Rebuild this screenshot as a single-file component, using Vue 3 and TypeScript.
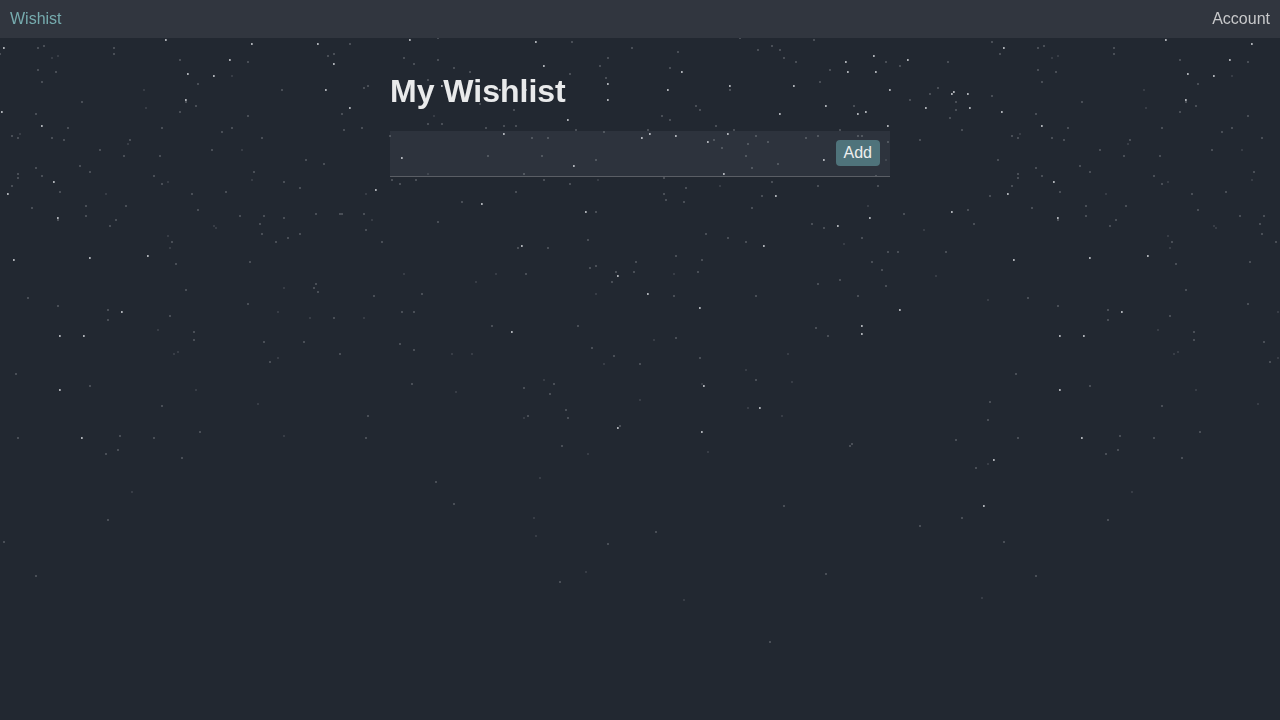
<script setup lang="ts">
import { ref } from 'vue'

type Layer = { name: string; stars: string }

const wish = ref('')
const wishes = ref<string[]>([])

function addWish(): void {
  const text = wish.value.trim()
  if (text) wishes.value.push(text)
  wish.value = ''
}

// Star centres as "x,y" pairs inside one repeating 1000px tile.
const layers: Layer[] = [
  {
    name: 'far',
    stars: `52,58 58,56 232,76 144,90 146,108 20,134 128,144 242,150 434,116 886,160 168,182 106,194
      168,236 170,248 252,180 214,226 216,228 284,288 428,174 598,180 366,194 372,220 404,274 496,274
      476,282 596,294 720,186 868,206 924,230 844,244 674,274 936,276 988,300 158,330 178,352 174,354
      196,390 284,436 258,404 278,358 278,312 310,318 132,492 364,318 452,354 472,354 604,364 654,340
      456,392 544,380 524,418 640,400 588,454 540,478 534,518 536,536 586,572 788,354 746,370 792,382
      702,384 748,408 782,416 708,452 988,464 982,598 684,600`,
  },
  {
    name: 'middle',
    stars: `38,48 44,46 0,54 1000,54 114,48 114,54 38,70 56,72 42,82 180,60 248,62 198,84 328,56 334,54
      82,102 36,114 186,102 196,106 180,112 282,90 248,116 68,128 162,128 232,128 222,132 262,138
      12,136 18,138 52,138 64,140 130,140 100,150 124,156 160,156 212,150 306,160
      350,44 438,38 404,58 414,64 438,60 454,68 470,72 572,42 632,48 608,58 600,66 570,74 606,78
      428,80 368,86 364,88 342,114 344,130 362,128 390,136 428,124 442,124 480,104 514,110 486,128
      504,126 516,126 532,138 548,138 576,130 604,132 648,130 662,116 488,156 542,156 596,160
      670,120 670,68 740,38 678,52 758,50 772,46 780,50 784,58 796,62 814,40 830,70 820,82 730,90
      696,106 700,110 716,126 734,130 886,62 900,66 948,62 992,42 938,88 930,94 910,100 956,102
      956,110 950,118 992,96 854,106 840,130 962,130 920,140 714,140 722,148 756,136 748,144 768,142
      806,138 818,136 858,136 862,136 888,142 746,156 998,160
      80,166 36,168 18,174 18,178 42,176 90,172 12,186 60,192 32,208 86,206 86,216 58,220 126,206
      116,220 110,226 154,176 162,184 192,194 198,210 172,242 176,264 226,192 254,172 284,182
      300,188 324,164 240,216 264,216 260,224 262,234 284,218 316,214 340,214 300,234 288,238
      276,242 250,262 186,290 28,298 58,306 248,304 316,284 314,288 318,292 108,310
      524,174 392,180 416,180 400,184 544,180 570,184 664,178 516,192 462,202 342,214 364,214
      366,230 438,222 382,242 596,212 588,240 518,248 548,248 664,194 666,200 526,274 374,296
      422,294 590,268 596,266 636,262 616,272 634,272 612,282
      752,168 778,164 876,176 772,182 762,196 686,188 684,202 752,208 818,186 878,186 904,214
      968,210 974,224 990,196 812,224 824,228 862,238 706,234 728,238 746,242 676,256 702,260
      698,272 674,296 756,296 818,284 840,280 872,262 882,270 886,286 858,296 888,252 898,252
      946,252 108,320 170,316 194,332 194,340 16,374 90,386 162,406 18,438 120,436 154,438
      118,450 106,454 200,432 182,458 270,362 264,342 304,342 334,318 108,520 4,542 36,576
      402,312 414,312 492,326 400,344 414,350 340,354 578,326 592,348 614,356 640,364 412,384
      554,384 524,388 550,394 566,410 568,418 528,416 620,426 562,446 368,416 366,438 436,482
      454,504 656,532 608,544 560,582 676,338 700,358 816,328 828,336 756,380 852,444 850,446
      990,402 988,420 956,440 976,468 784,506 962,518 920,526 826,574 770,642`,
  },
  {
    name: 'near',
    stars: `4,48 166,40 252,44 318,44 230,60 188,74 214,76 334,64 326,90 186,100 2,112 42,126
      410,40 536,42 544,66 608,84 608,100 568,120 350,108 504,134 650,134 642,138 402,158 668,90
      442,86 500,90 526,90 682,72 730,86 794,86 846,62 848,72 874,56 876,72 908,60 890,90 826,106
      780,114 858,114 866,112 888,126 926,108 954,92 952,94 968,94 970,108 728,134 676,136 708,142
      824,160 54,182 8,194 58,218 14,260 90,258 148,256 574,166 376,190 482,204 586,212 522,246
      618,276 648,294 724,174 776,196 764,246 870,218 838,226 952,212 700,308 900,310 122,312
      60,336 84,336 60,390 82,438 512,332 618,428 862,326 862,334 704,386 760,408 702,432
      994,460 984,506`,
  },
]

function toPath(stars: string, width: number, shift: number): string {
  return stars
    .trim()
    .split(/\s+/)
    .map((pair) => {
      const [x, y] = pair.split(',').map(Number)
      return `M${x + shift} ${y - 1}h${width}v2h${-width}z`
    })
    .join('')
}
</script>

<template>
  <div class="page">
    <svg class="sky" aria-hidden="true" shape-rendering="crispEdges">
      <defs>
        <pattern id="stars" width="1000" height="1000" patternUnits="userSpaceOnUse">
          <path
            v-for="layer in layers"
            :key="layer.name"
            :class="layer.name"
            :d="toPath(layer.stars, 2, -1)"
          />
          <path class="glint" :d="toPath(layers[2].stars, 1, -1)" />
        </pattern>
      </defs>
      <rect width="100%" height="100%" fill="url(#stars)" />
    </svg>

    <header class="bar">
      <a class="brand" href="#">Wishist</a>
      <a class="account" href="#account">Account</a>
    </header>

    <main class="content">
      <h1>My Wishlist</h1>
      <form class="entry" @submit.prevent="addWish">
        <input v-model="wish" type="text" aria-label="New wish" />
        <button type="submit">Add</button>
      </form>
      <ul v-if="wishes.length" class="wishes">
        <li v-for="(item, i) in wishes" :key="i">{{ item }}</li>
      </ul>
    </main>
  </div>
</template>

<style>
body {
  margin: 0;
  background: #222831;
}
</style>

<style scoped>
.page {
  min-height: 100vh;
  font-family: Helvetica, 'Liberation Sans', Arial, sans-serif;
  font-size: 16px;
  line-height: 18px;
  color: #e9eaeb;
}

.sky {
  position: fixed;
  inset: 0;
  z-index: -1;
  width: 100%;
  height: 100%;
}

.far {
  fill: rgba(255, 255, 255, 0.1);
}

.middle {
  fill: rgba(255, 255, 255, 0.18);
}

.near {
  fill: #858990;
}

.glint {
  fill: #adb0b5;
}

.bar {
  display: flex;
  justify-content: space-between;
  padding: 10px;
  background: #31363f;
}

.bar a {
  text-decoration: none;
}

.brand {
  color: #76abae;
}

.account {
  color: #c8c9cb;
}

.content {
  max-width: 500px;
  margin: 0 auto;
  padding-top: 14px;
}

h1 {
  margin: 21px 0;
  font-size: 32px;
  line-height: 37px;
}

.entry {
  display: flex;
  align-items: center;
  padding: 9px 10px 10px;
  background: rgba(220, 235, 250, 0.06);
  border-bottom: 1px solid #5a5e65;
}

input {
  flex: 1;
  min-width: 0;
  padding: 0;
  border: 0;
  outline: 0;
  background: transparent;
  color: inherit;
  font: inherit;
}

button {
  padding: 4px 8px;
  border: 0;
  border-radius: 4px;
  background: #4f737b;
  color: #eeeeee;
  font: inherit;
  cursor: pointer;
}

.wishes {
  margin: 0;
  padding: 0;
  list-style: none;
}

.wishes li {
  padding: 10px;
}
</style>
